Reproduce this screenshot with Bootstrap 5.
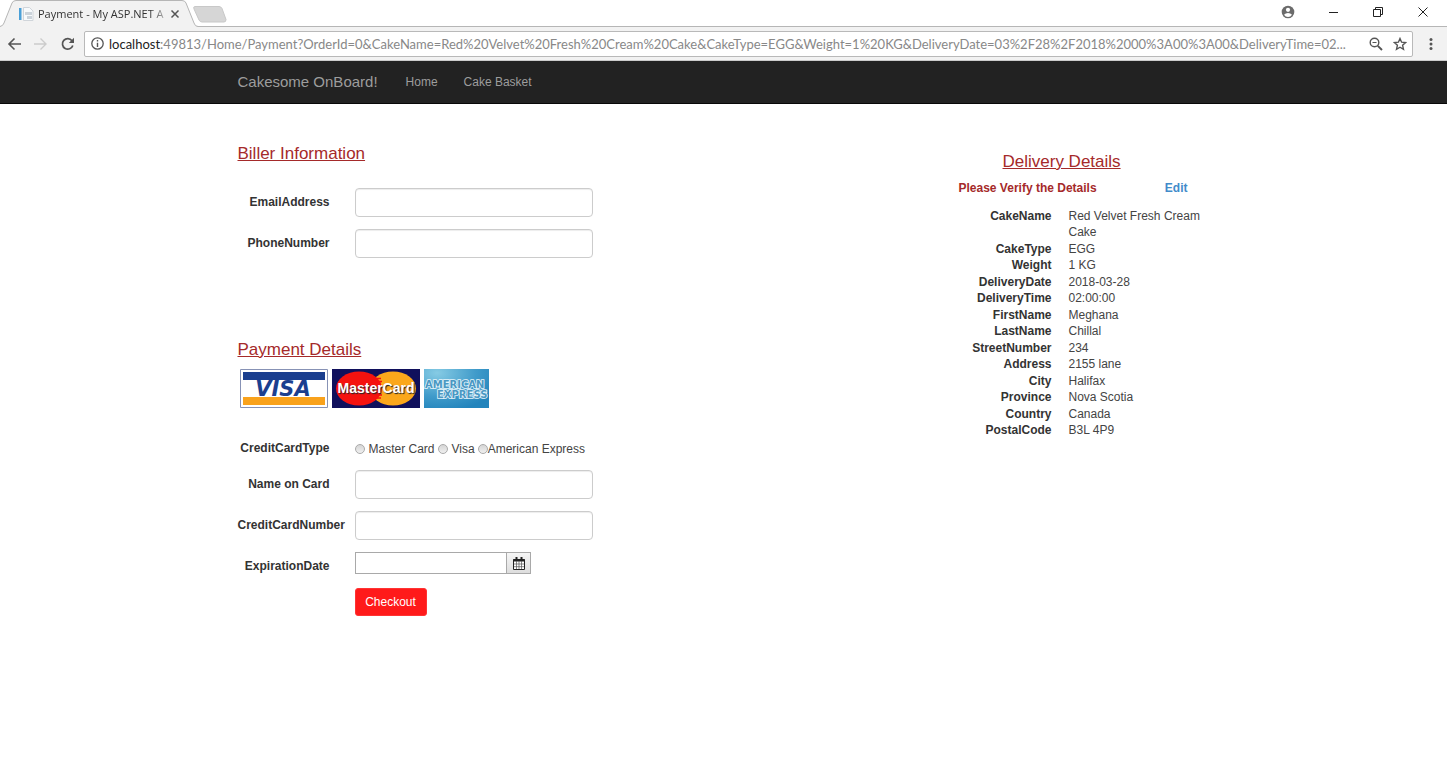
<!DOCTYPE html>
<html lang="en">
<head>
<meta charset="utf-8">
<meta name="viewport" content="width=device-width, initial-scale=1">
<title>Payment - My ASP.NET Application</title>
<link href="https://cdn.jsdelivr.net/npm/bootstrap@5.3.0/dist/css/bootstrap.min.css" rel="stylesheet">
<style>
body{font:12px/16px "Liberation Sans",Arial,sans-serif;color:#333;background:#fff}
svg{display:block;flex:none}
.chrome-ui{font-family:"Open Sans","Noto Sans",sans-serif}
.tab-strip{height:27px;border-bottom:1px solid #b6b6b6}
.page-tab{width:199px;height:27px;padding-left:19px;margin-bottom:-1px;isolation:isolate}
.tab-shape{position:absolute;left:0;top:0;z-index:-1}
.tab-title{width:126px;margin-left:4px;font-size:11px;color:#333;white-space:nowrap;-webkit-mask-image:linear-gradient(90deg,#000 112px,transparent 134px);mask-image:linear-gradient(90deg,#000 112px,transparent 134px)}
.tool-btn{background:none;border:0;padding:0}
.win-btns{gap:33px;padding-right:18px;height:24px}
.tool-bar{height:34px;background:#f2f2f2;padding-left:7px;padding-right:9px;border-bottom:1px solid #ccc}
.nav-keys{gap:12px}
.url-box{height:26px;background:#fff;border:1px solid #b9b9b9;border-radius:2px;font-family:Lato,sans-serif;font-size:13px;line-height:20px;color:#222;padding:0 5px 0 6px;margin-left:9px;margin-right:11px}
.url-box label{margin-left:5px}
.url-box input{border:0;padding:0;margin:0;color:#888;background:none;outline:0;min-width:0}
.url-keys{gap:10px}
.wrap-page{max-width:996px;padding:0 12px}
.site-nav{background:#222;border-bottom:1px solid #080808;height:43px;padding:0}
.site-nav a{color:#9d9d9d;text-decoration:none}
.site-nav .navbar-brand{font-size:15px;padding:0;margin:0 28px 0 0}
.site-nav .site-links{gap:26px}
.title-red{font-size:17px;line-height:20px;font-weight:400;color:#a52a2a;text-decoration:underline;margin:0}
.form-line{display:grid;grid-template-columns:92px 238px;column-gap:25px;align-items:center;margin-bottom:12px}
.form-line label.field-name{font-weight:700;text-align:right;white-space:nowrap;padding-bottom:2px}
.form-line .form-control{height:29px;padding:4px 10px;font-size:12px;border:1px solid #ccc;border-radius:4px;box-shadow:inset 0 1px 1px rgba(0,0,0,.075)}
.first-block{padding-top:40px}
.biller-lines{margin-top:24px;padding-bottom:70px}
.card-logos{gap:4px;padding-left:2px;margin:9px 0 32px}
.type-line{margin-bottom:12px}
.type-line input{appearance:none;width:10px;height:10px;border:1px solid #aaa;border-radius:50%;background:linear-gradient(#d5d5d5,#f0f0f0);margin:0}
.type-line input:checked{background:#555}
.type-line label + input{margin-left:3px}
.type-line .form-opts{color:#444;white-space:nowrap}
.date-line{align-items:start}
.date-line label.field-name{padding:6px 0 2px}
.date-box input{width:152px;height:22px;border:1px solid #a9a9a9;padding:1px 4px}
.date-box button{width:24px;height:22px;border:1px solid #a9a9a9;border-left:0;background:linear-gradient(#f6f6f6,#ddd);padding:0 0 0 6px}
.btn-checkout{grid-column:2;justify-self:start;width:72px;height:28px;font-size:12px;line-height:16px;padding:0;color:#fff;background:#ff1a1a;border:1px solid #f33;border-radius:3px}
.btn-checkout:hover{background:#e00;color:#fff}
.delivery{width:251px;padding-top:48px}
.delivery .title-red{padding-left:44px}
.verify{color:#a52a2a;font-weight:700;margin:8px 0 12px;padding-right:22px}
.verify a{color:#428bca;text-decoration:none}
.facts{display:grid;grid-template-columns:93px 140px;column-gap:17px;align-content:space-between;min-height:230px;margin:0}
.facts dt{text-align:right;white-space:nowrap}
.facts dd{margin:0;color:#444}
</style>
</head>
<body>
<header class="chrome-ui">
  <div class="tab-strip d-flex justify-content-between">
    <div class="d-flex">
      <div class="page-tab position-relative d-flex align-items-center">
        <svg class="tab-shape" width="200" height="27" viewBox="0 0 200 27"><path d="M0 26.500Q3 26 4 23L12 3Q13 .5 16 .5H182Q185 .5 186 3L194 23Q195 26.500 198 26.500V27H0z" fill="#f2f2f2"/><path d="M0 26.500Q3 26 4 23L12 3Q13 .5 16 .5H182Q185 .5 186 3L194 23Q195 26.500 198 26.500" fill="none" stroke="#b6b6b6"/></svg>
        <svg width="15" height="14" viewBox="0 0 15 14"><path d="M0 1h2.500v12H0z" fill="#4aa0d8"/><path d="M4.500.5h6l3.500 3.500v9.500H4.500z" fill="#f7fafc" stroke="#d0d5da"/><path d="M6 5h7v3H6zM8 9h5v3H8z" fill="#cbd3da"/></svg>
        <span class="tab-title">Payment - My ASP.NET A</span>
        <button class="tool-btn ms-1" aria-label="Close tab"><svg width="16" height="10" viewBox="0 0 16 10"><path d="M3.500 1.500l7 7m0-7l-7 7" stroke="#555" stroke-width="1.500"/></svg></button>
      </div>
      <button class="tool-btn" aria-label="New tab"><svg width="28" height="26" viewBox="0 0 33 26" preserveAspectRatio="xMinYMid slice" overflow="visible"><path d="M-4 6.500H20q2 0 3 2l4 11q0 2.500-2 2.500H3q-2 0-3-2l-5-11q-1-2.500 1-2.500z" fill="#d6d6d6" stroke="#c8c8c8"/></svg></button>
    </div>
    <div class="win-btns d-flex align-items-center">
      <button class="tool-btn" aria-label="Profile"><svg width="14" height="14" viewBox="0 0 14 14"><circle cx="7" cy="7" r="6.300" fill="#6b6b6b"/><circle cx="7" cy="4.800" r="2.100" fill="#fff"/><path d="M3 9.800Q4.500 8 7 8t4 1.800Q9.500 12 7 12T3 9.800z" fill="#fff"/></svg></button>
      <button class="tool-btn" aria-label="Minimize"><svg width="11" height="10" viewBox="0 0 11 10"><path d="M1 5.500h9" stroke="#222"/></svg></button>
      <button class="tool-btn" aria-label="Restore"><svg width="12" height="12" viewBox="0 0 12 12"><path d="M1.500 3.500h7v7h-7zM3.500 3.500v-2h7v7h-2" fill="none" stroke="#222"/></svg></button>
      <button class="tool-btn" aria-label="Close"><svg width="12" height="12" viewBox="0 0 12 12"><path d="M1.500 1.500l9 9m0-9l-9 9" stroke="#222"/></svg></button>
    </div>
  </div>
  <div class="tool-bar d-flex align-items-center">
    <div class="nav-keys d-flex">
      <button class="tool-btn" aria-label="Back"><svg width="15" height="14" viewBox="0 0 15 14"><path d="M14 7H2m5.500-5.500L2 7l5.500 5.500" fill="none" stroke="#555" stroke-width="1.600"/></svg></button>
      <button class="tool-btn" aria-label="Forward"><svg width="14" height="14" viewBox="0 0 14 14"><path d="M0 7h12M6.500 1.500L12 7l-5.500 5.500" fill="none" stroke="#ccc" stroke-width="1.400"/></svg></button>
      <button class="tool-btn" aria-label="Reload"><svg width="15" height="14" viewBox="0 0 15 14"><path d="M12 3.700A5.300 5.300 0 1 0 12.800 8.500" fill="none" stroke="#555" stroke-width="1.700"/><path d="M14 .8V6H8.800z" fill="#555"/></svg></button>
    </div>
    <div class="url-box flex-grow-1 d-flex align-items-center">
      <svg width="13" height="13" viewBox="0 0 13 13"><circle cx="6.500" cy="6.500" r="5.700" fill="none" stroke="#555" stroke-width="1.300"/><path d="M6.500 5.700V10M6.500 3v1.500" stroke="#555" stroke-width="1.400"/></svg>
      <label for="address">localhost</label>
      <input id="address" class="flex-grow-1" type="text" value=":49813/Home/Payment?OrderId=0&amp;CakeName=Red%20Velvet%20Fresh%20Cream%20Cake&amp;CakeType=EGG&amp;Weight=1%20KG&amp;DeliveryDate=03%2F28%2F2018%2000%3A00%3A00&amp;DeliveryTime=02...">
      <div class="url-keys d-flex ms-2">
        <button class="tool-btn" aria-label="Zoom out"><svg width="14" height="14" viewBox="0 0 14 14"><circle cx="5.500" cy="5.500" r="4.300" fill="none" stroke="#555" stroke-width="1.400"/><path d="M3.500 5.500h4" stroke="#555"/><path d="M8.800 8.800l4.200 4.200" stroke="#555" stroke-width="1.900"/></svg></button>
        <button class="tool-btn" aria-label="Bookmark"><svg width="14" height="14" viewBox="0 0 14 14"><path d="M7 1.500l1.600 3.700 4 .4-3 2.700.9 4L7 10.200 3.500 12.300l.9-4-3-2.700 4-.4z" fill="none" stroke="#555" stroke-width="1.400"/></svg></button>
      </div>
    </div>
    <button class="tool-btn" aria-label="Menu"><svg width="14" height="14" viewBox="0 0 14 14"><g fill="#555"><circle cx="7" cy="2.500" r="1.500"/><circle cx="7" cy="7" r="1.500"/><circle cx="7" cy="11.500" r="1.500"/></g></svg></button>
  </div>
</header>

<nav class="navbar site-nav">
  <div class="container-fluid wrap-page d-flex justify-content-start">
    <a class="navbar-brand" href="#">Cakesome OnBoard!</a>
    <div class="site-links d-flex"><a href="#">Home</a><a href="#">Cake Basket</a></div>
  </div>
</nav>

<main class="container-fluid wrap-page d-flex justify-content-between align-items-start">
  <form class="first-block">
    <h4 class="title-red">Biller Information</h4>
    <div class="biller-lines">
      <div class="form-line"><label class="field-name" for="email">EmailAddress</label><input class="form-control" id="email" type="text"></div>
      <div class="form-line"><label class="field-name" for="phone">PhoneNumber</label><input class="form-control" id="phone" type="text"></div>
    </div>
    <h4 class="title-red">Payment Details</h4>
    <div class="card-logos d-flex">
      <svg width="88" height="39" viewBox="0 0 88 39" role="img" aria-label="Visa"><path d="M.5.5h87v38H.5z" fill="#fff" stroke="#8792b5"/><path d="M3 3h82v8H3z" fill="#1b3f8f"/><path d="M3 28h82v8H3z" fill="#f9a21c"/><text x="43" y="27" text-anchor="middle" font-family="DejaVu Sans,sans-serif" font-size="21" font-weight="700" font-style="italic" fill="#1b3f8f">VISA</text></svg>
      <svg width="88" height="39" viewBox="0 0 88 39" role="img" aria-label="MasterCard"><path d="M0 0h88v39H0z" fill="#10105c"/><ellipse cx="61" cy="19.500" rx="23" ry="17" fill="#fba71b"/><ellipse cx="27" cy="19.500" rx="23" ry="17" fill="#f5120f"/><path d="M40 9.500h9M39 12.500h11M39 26h11M40 29h9" stroke="#f5120f" stroke-width="1.500"/><text x="44" y="24" text-anchor="middle" font-family="Liberation Sans,sans-serif" font-size="14" font-weight="700" fill="#fff" style="text-shadow:1px 1px 1px #222">MasterCard</text></svg>
      <svg width="65" height="39" viewBox="0 0 65 39" role="img" aria-label="American Express"><defs><radialGradient id="sea" cx=".2" cy=".1" r="1"><stop stop-color="#86cbe4"/><stop offset=".6" stop-color="#409bca"/><stop offset="1" stop-color="#2384bc"/></radialGradient></defs><path d="M0 0h65v39H0z" fill="url(#sea)"/><g font-family="DejaVu Sans,sans-serif" font-size="10" font-weight="700" fill="#4b98c3" stroke="#e6f5fb" stroke-width="1.600" paint-order="stroke"><text x="1" y="19">AMERICAN</text><text x="13" y="29">EXPRESS</text></g></svg>
    </div>
    <div class="form-line type-line"><label class="field-name" for="master">CreditCardType</label>
      <div class="form-opts d-flex align-items-center">
        <input type="radio" name="kind" id="master"><label class="ms-1" for="master">Master Card</label>
        <input type="radio" name="kind" id="visa"><label class="ms-1" for="visa">Visa</label>
        <input type="radio" name="kind" id="amex"><label for="amex">American Express</label>
      </div></div>
    <div class="form-line"><label class="field-name" for="holder">Name on Card</label><input class="form-control" id="holder" type="text"></div>
    <div class="form-line"><label class="field-name" for="number">CreditCardNumber</label><input class="form-control" id="number" type="text"></div>
    <div class="form-line date-line"><label class="field-name" for="expires">ExpirationDate</label>
      <div class="date-box d-flex"><input id="expires" type="text"><button type="button" aria-label="Open calendar"><svg width="12" height="13" viewBox="0 0 12 13"><path d="M.5 2.500h11v10H.5z" fill="#fff" stroke="#222"/><path d="M.5 2h11v2.500H.5z" fill="#222"/><path d="M3.500 0v3M8.500 0v3" stroke="#222" stroke-width="2"/><path d="M3.500 4v8M6 4v8M8.500 4v8M1 7h10M1 9.700h10" stroke="#555" stroke-width=".7"/></svg></button></div></div>
    <div class="form-line"><button class="btn btn-checkout" type="submit">Checkout</button></div>
  </form>

  <section class="delivery">
    <h4 class="title-red">Delivery Details</h4>
    <div class="verify d-flex justify-content-between"><span>Please Verify the Details</span><a href="#">Edit</a></div>
    <dl class="facts">
      <dt>CakeName</dt><dd>Red Velvet Fresh Cream Cake</dd>
      <dt>CakeType</dt><dd>EGG</dd>
      <dt>Weight</dt><dd>1 KG</dd>
      <dt>DeliveryDate</dt><dd>2018-03-28</dd>
      <dt>DeliveryTime</dt><dd>02:00:00</dd>
      <dt>FirstName</dt><dd>Meghana</dd>
      <dt>LastName</dt><dd>Chillal</dd>
      <dt>StreetNumber</dt><dd>234</dd>
      <dt>Address</dt><dd>2155 lane</dd>
      <dt>City</dt><dd>Halifax</dd>
      <dt>Province</dt><dd>Nova Scotia</dd>
      <dt>Country</dt><dd>Canada</dd>
      <dt>PostalCode</dt><dd>B3L 4P9</dd>
    </dl>
  </section>
</main>
<script src="https://cdn.jsdelivr.net/npm/bootstrap@5.3.0/dist/js/bootstrap.bundle.min.js"></script>
</body>
</html>
